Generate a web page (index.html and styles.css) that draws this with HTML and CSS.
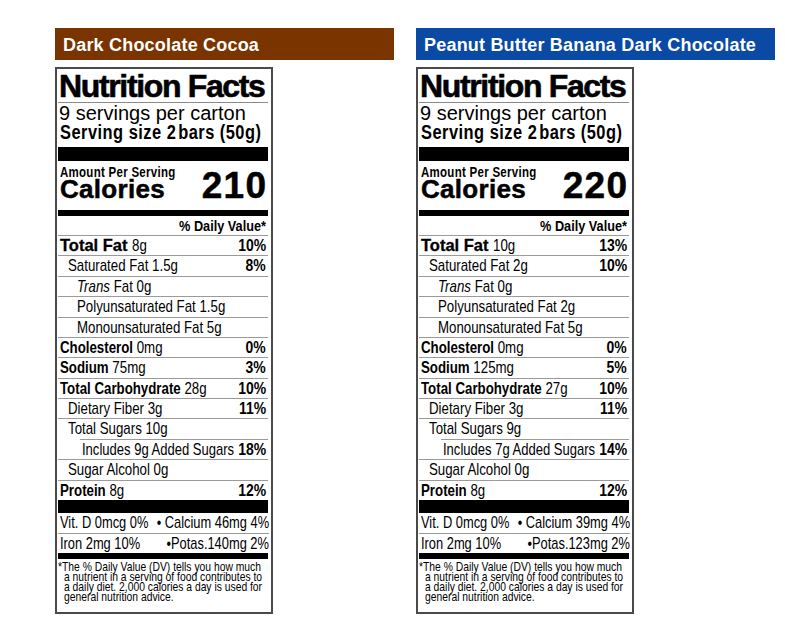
FILE: index.html
```html
<!DOCTYPE html>
<html lang="en">
<head>
<meta charset="utf-8">
<title>Nutrition Facts</title>
<link rel="stylesheet" href="styles.css">
</head>
<body>
<main class="page">
  <section class="product product-left">
    <h2 class="product-title title-brown">Dark Chocolate Cocoa</h2>
    <div class="label">
      <h1 class="nf-title">Nutrition Facts</h1>
      <div class="servings">9 servings per carton</div>
      <div class="serving-size"><span class="cx">Serving size 2&#8202;bars (50g)</span></div>
      <div class="bar-thick"></div>
      <div class="cal-block">
        <div class="cal-left">
          <div class="amount"><span class="cx">Amount Per Serving</span></div>
          <div class="calories">Calories</div>
        </div>
        <div class="cal-num">210</div>
      </div>
      <div class="bar-med"></div>
      <div class="dv-head"><span class="cx cx-r">% Daily Value*</span></div>
      <div class="row"><span class="nm"><b class="wide">Total Fat</b> <span class="cx">8g</span></span><b class="pct cx cx-r">10%</b></div>
      <div class="row ind1"><span class="nm cx">Saturated Fat 1.5g</span><b class="pct cx cx-r">8%</b></div>
      <div class="row ind2"><span class="nm cx"><i>Trans</i> Fat 0g</span></div>
      <div class="row ind2"><span class="nm cx">Polyunsaturated Fat 1.5g</span></div>
      <div class="row ind2"><span class="nm cx">Monounsaturated Fat 5g</span></div>
      <div class="row"><span class="nm cx"><b>Cholesterol</b> 0mg</span><b class="pct cx cx-r">0%</b></div>
      <div class="row"><span class="nm cx"><b>Sodium</b> 75mg</span><b class="pct cx cx-r">3%</b></div>
      <div class="row"><span class="nm cx"><b>Total Carbohydrate</b> 28g</span><b class="pct cx cx-r">10%</b></div>
      <div class="row ind1"><span class="nm cx">Dietary Fiber 3g</span><b class="pct cx cx-r">11%</b></div>
      <div class="row ind1"><span class="nm cx">Total Sugars 10g</span></div>
      <div class="row ind3"><span class="nm cx">Includes 9g Added Sugars</span><b class="pct cx cx-r">18%</b></div>
      <div class="row ind1"><span class="nm cx">Sugar Alcohol 0g</span></div>
      <div class="row"><span class="nm cx"><b>Protein</b> 8g</span><b class="pct cx cx-r">12%</b></div>
      <div class="bar-thick bar-bottom"></div>
      <div class="vit-row"><span class="vt-l cx">Vit. D 0mcg 0%</span><span class="vt-r cx cx-r">&bull; Calcium 46mg 4%</span></div>
      <div class="vit-row vit-sep"><span class="vt-l cx">Iron 2mg 10%</span><span class="vt-r cx cx-r">&bull;Potas.140mg 2%</span></div>
      <div class="bar-med bar-foot"></div>
      <p class="footnote">
        <span class="fn-line">*The % Daily Value (DV) tells you how much</span>
        <span class="fn-line fn-ind">a nutrient in a serving of food contributes to</span>
        <span class="fn-line fn-ind">a daily diet. 2,000 calories a day is used for</span>
        <span class="fn-line fn-ind">general nutrition advice.</span>
      </p>
    </div>
  </section>

  <section class="product product-right">
    <h2 class="product-title title-blue">Peanut Butter Banana Dark Chocolate</h2>
    <div class="label">
      <h1 class="nf-title">Nutrition Facts</h1>
      <div class="servings">9 servings per carton</div>
      <div class="serving-size"><span class="cx">Serving size 2&#8202;bars (50g)</span></div>
      <div class="bar-thick"></div>
      <div class="cal-block">
        <div class="cal-left">
          <div class="amount"><span class="cx">Amount Per Serving</span></div>
          <div class="calories">Calories</div>
        </div>
        <div class="cal-num">220</div>
      </div>
      <div class="bar-med"></div>
      <div class="dv-head"><span class="cx cx-r">% Daily Value*</span></div>
      <div class="row"><span class="nm"><b class="wide">Total Fat</b> <span class="cx">10g</span></span><b class="pct cx cx-r">13%</b></div>
      <div class="row ind1"><span class="nm cx">Saturated Fat 2g</span><b class="pct cx cx-r">10%</b></div>
      <div class="row ind2"><span class="nm cx"><i>Trans</i> Fat 0g</span></div>
      <div class="row ind2"><span class="nm cx">Polyunsaturated Fat 2g</span></div>
      <div class="row ind2"><span class="nm cx">Monounsaturated Fat 5g</span></div>
      <div class="row"><span class="nm cx"><b>Cholesterol</b> 0mg</span><b class="pct cx cx-r">0%</b></div>
      <div class="row"><span class="nm cx"><b>Sodium</b> 125mg</span><b class="pct cx cx-r">5%</b></div>
      <div class="row"><span class="nm cx"><b>Total Carbohydrate</b> 27g</span><b class="pct cx cx-r">10%</b></div>
      <div class="row ind1"><span class="nm cx">Dietary Fiber 3g</span><b class="pct cx cx-r">11%</b></div>
      <div class="row ind1"><span class="nm cx">Total Sugars 9g</span></div>
      <div class="row ind3"><span class="nm cx">Includes 7g Added Sugars</span><b class="pct cx cx-r">14%</b></div>
      <div class="row ind1"><span class="nm cx">Sugar Alcohol 0g</span></div>
      <div class="row"><span class="nm cx"><b>Protein</b> 8g</span><b class="pct cx cx-r">12%</b></div>
      <div class="bar-thick bar-bottom"></div>
      <div class="vit-row"><span class="vt-l cx">Vit. D 0mcg 0%</span><span class="vt-r cx cx-r">&bull; Calcium 39mg 4%</span></div>
      <div class="vit-row vit-sep"><span class="vt-l cx">Iron 2mg 10%</span><span class="vt-r cx cx-r">&bull;Potas.123mg 2%</span></div>
      <div class="bar-med bar-foot"></div>
      <p class="footnote">
        <span class="fn-line">*The % Daily Value (DV) tells you how much</span>
        <span class="fn-line fn-ind">a nutrient in a serving of food contributes to</span>
        <span class="fn-line fn-ind">a daily diet. 2,000 calories a day is used for</span>
        <span class="fn-line fn-ind">general nutrition advice.</span>
      </p>
    </div>
  </section>
</main>
</body>
</html>
```

FILE: styles.css
```css
html, body {
  margin: 0;
  padding: 0;
  background: #ffffff;
}

body {
  font-family: "Liberation Sans", Arial, sans-serif;
  color: #000;
}

.page {
  display: flex;
  gap: 22px;
  padding: 28px 0 0 55px;
}

.product-left { width: 339px; }
.product-right { width: 359px; }

.product-title {
  margin: 0;
  height: 32px;
  box-sizing: border-box;
  padding: 2px 0 0 8px;
  line-height: 30px;
  font-weight: 700;
  font-size: 18px;
  letter-spacing: 0.2px;
  color: #ffffff;
  white-space: nowrap;
}

.title-brown { background: #7a3400; }
.title-blue { background: #0a49a4; }

/* condensed text: Liberation Sans squeezed to Arial Narrow proportions */
.cx {
  display: inline-block;
  white-space: nowrap;
  transform: scaleX(0.82);
  transform-origin: 0 50%;
}

.cx-r { transform-origin: 100% 50%; }

.label {
  margin-top: 7px;
  width: 218px;
  box-sizing: border-box;
  border: 2px solid #4a4a4a;
  padding: 0 3px 9px 1px;
}

.nf-title {
  margin: 0;
  padding: 1px 0 0 1px;
  font-weight: 700;
  font-size: 32px;
  line-height: 32px;
  letter-spacing: -1.35px;
  -webkit-text-stroke: 0.6px #000;
  white-space: nowrap;
  border-bottom: 1px solid #8a8a8a;
}

.servings {
  font-size: 20px;
  line-height: 20px;
  padding-left: 1px;
  white-space: nowrap;
}

.serving-size {
  font-weight: 700;
  font-size: 20px;
  line-height: 18px;
  letter-spacing: 0.6px;
  padding-left: 2px;
}

.bar-thick {
  height: 14px;
  margin-top: 6px;
  background: #000;
}

.cal-block {
  display: flex;
  justify-content: space-between;
  align-items: flex-end;
  margin-top: 4px;
  padding: 0 2px;
}

.amount {
  font-weight: 700;
  font-size: 14px;
  line-height: 14px;
  letter-spacing: 0.35px;
}

.calories {
  font-weight: 700;
  font-size: 26px;
  line-height: 20px;
  letter-spacing: 0.3px;
  -webkit-text-stroke: 0.5px #000;
}

.cal-num {
  font-weight: 700;
  font-size: 37px;
  line-height: 27px;
  letter-spacing: 1.3px;
  margin-right: -1.3px;
  -webkit-text-stroke: 0.5px #000;
}

.bar-med {
  height: 6px;
  margin-top: 11px;
  background: #000;
}

.bar-foot { margin-top: 0; }

.dv-head {
  text-align: right;
  font-weight: 700;
  font-size: 15.5px;
  line-height: 18px;
  padding: 1px 2px 0 0;
}

.row {
  display: flex;
  justify-content: space-between;
  border-top: 1px solid #9a9a9a;
  height: 19.38px;
  line-height: 19.38px;
  font-size: 16.2px;
  padding: 0 2px;
}

.row b { font-weight: 700; }
.row i { font-style: italic; }

.wide {
  font-size: 16.5px;
  -webkit-text-stroke: 0.3px #000;
}

.nm {
  flex: 0 1 auto;
  min-width: 0;
  white-space: nowrap;
}

.pct {
  flex: 0 0 auto;
  font-size: 17px;
}

.ind1 { padding-left: 10px; }
.ind2 { padding-left: 19px; }
.ind3 {
  margin-left: 22px;
  padding-left: 2px;
  font-size: 15.9px;
}

.bar-bottom {
  margin-top: 0;
  height: 13px;
}

.vit-row {
  display: flex;
  justify-content: space-between;
  font-size: 15.7px;
  line-height: 20px;
  padding: 0 0 0 2px;
  margin-right: -1px;
}

.vt-l {
  flex: 0 1 auto;
  min-width: 0;
}

.vt-r { flex: 0 0 auto; }

.vit-sep {
  border-top: 1px solid #9a9a9a;
  line-height: 19px;
}

.footnote {
  margin: 0;
  padding: 3px 0 0 0;
  font-size: 12.6px;
  line-height: 10.2px;
}

.fn-line {
  display: block;
  white-space: nowrap;
  transform: scaleX(0.82);
  transform-origin: 0 50%;
}

.fn-ind { margin-left: 6px; }
```
